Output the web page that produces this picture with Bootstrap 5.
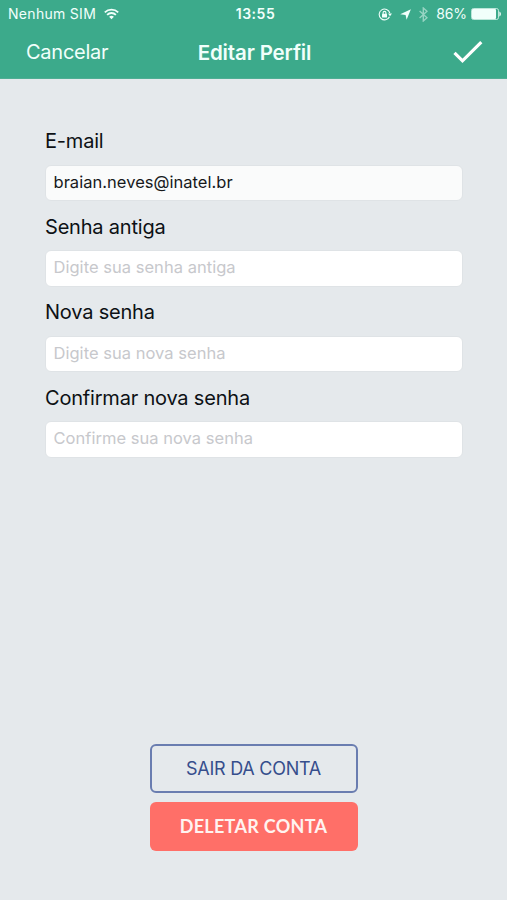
<!DOCTYPE html>
<html lang="pt-BR">
<head>
<meta charset="utf-8">
<meta name="viewport" content="width=device-width, initial-scale=1">
<title>Editar Perfil</title>
<link href="https://cdn.jsdelivr.net/npm/bootstrap@5.3.0/dist/css/bootstrap.min.css" rel="stylesheet">
<style>
body { font-family: Inter, "Liberation Sans", sans-serif; background: #e5e9ec; color: #0d1115; }
.app-header { height: 79px; background: #3caa8b; color: #f1fffb; border-bottom: 1px solid #4fae94; }
.status-bar { height: 28px; font-size: 14px; padding: 0 6px 0 8px; line-height: 28px; }
.status-side { flex: 1 1 0; }
.carrier { letter-spacing: .3px; }
.clock { font-weight: 600; letter-spacing: .55px; padding-left: 2px; }
.battery-text { letter-spacing: -.1px; }
.title-bar { height: 49px; padding: 0 24px 0 26px; font-size: 20px; line-height: 49px; }
.cancel { color: inherit; font-size: 20px; letter-spacing: -.25px; }
.screen-title { font-size: 20.5px; font-weight: 600; letter-spacing: -.15px; }
.profile-form { padding: 48px 44px 0 45px; }
.field { margin-bottom: 11.5px; }
.field .form-label { display: block; font-size: 20px; line-height: 28px; margin-bottom: 9.5px; letter-spacing: -.2px; }
.field .form-control { height: 36.5px; font-size: 16.5px; line-height: 24px; padding: 4px 8px 6px 7.5px; border: 1px solid #dfe3e6; border-radius: 6px; color: #17191b; background: #fff; letter-spacing: .03px; }
.field .form-control::placeholder { color: #c7c8cc; opacity: 1; }
.field .form-control.filled { background: #fafbfb; }
.actions { padding-bottom: 49px; gap: 9px; }
.actions .btn { width: 208px; height: 49px; padding: 0; border-radius: 6px; font-size: 18px; }
.btn-signout, .btn-signout:hover { color: #364e8c; border: 2px solid #6a7db0; letter-spacing: -.25px; }
.actions .btn-delete { background: #ff6f68; color: #fff3f0; border: 0; font-family: Lato, sans-serif; font-weight: 700; letter-spacing: .3px; }
svg { display: block; }
</style>
</head>
<body>
<div class="d-flex flex-column vh-100">
  <header class="app-header flex-shrink-0">
    <div class="status-bar d-flex align-items-center">
      <div class="status-side d-flex align-items-center">
        <span class="carrier">Nenhum SIM</span>
        <svg class="ms-2" width="15" height="12" viewBox="0 0 15 12" fill="none" stroke="currentColor" stroke-width="1.8"><path d="M.8 4.3a9.6 9.6 0 0 1 13.4 0M3.1 6.8a6.3 6.3 0 0 1 8.8 0"/><path d="M7.5 11.3 5.1 8.8a3.5 3.5 0 0 1 4.8 0z" fill="currentColor" stroke="none"/></svg>
      </div>
      <span class="clock">13:55</span>
      <div class="status-side d-flex align-items-center justify-content-end">
        <svg width="14" height="13" viewBox="0 0 14 13" fill="none" stroke="currentColor" stroke-width="1.1"><path d="M11.5 8.7A5.4 5.4 0 1 1 11.8 5"/><path d="M10 5.4h4l-2 2.8z" fill="currentColor" stroke="none"/><rect x="4" y="5.8" width="5" height="3.8" rx=".5" fill="currentColor" stroke="none"/><path d="M5.1 6V4.8a1.4 1.4 0 0 1 2.8 0V6"/></svg>
        <svg class="ms-2" width="11" height="11" viewBox="0 0 11 11" fill="currentColor"><path d="M10.9.3 6.6 10.8 5.6 6 .2 5.2z"/></svg>
        <svg class="ms-2 opacity-50" width="9" height="15" viewBox="0 0 9 15" fill="none" stroke="currentColor" stroke-width="1.4"><path d="M.6 4 8 10.8 4.3 14V1L8 4.2.6 11"/></svg>
        <span class="battery-text ms-2">86%</span>
        <svg class="ms-1" width="30" height="12" viewBox="0 0 30 12" fill="currentColor"><rect x=".5" y=".5" width="27" height="11" rx="2" fill="none" stroke="currentColor" stroke-opacity=".7"/><rect x="1" y="1" width="24" height="10" rx="1"/><path d="M28.4 3.6c2 .9 2 3.9 0 4.8z"/></svg>
      </div>
    </div>
    <div class="title-bar d-flex align-items-center">
      <div class="status-side"><a href="#" class="cancel text-decoration-none">Cancelar</a></div>
      <span class="screen-title">Editar Perfil</span>
      <div class="status-side d-flex justify-content-end">
        <svg width="30" height="24" viewBox="0 0 30 24" fill="none" stroke="#fff" stroke-width="3.2"><path d="m1.5 11.8 8 8L28.3 1.2"/></svg>
      </div>
    </div>
  </header>
  <main class="d-flex flex-column flex-grow-1">
    <form class="profile-form">
      <div class="field"><label class="form-label" for="email">E-mail</label><input id="email" class="form-control filled shadow-none" type="text" value="braian.neves@inatel.br"></div>
      <div class="field"><label class="form-label" for="old">Senha antiga</label><input id="old" class="form-control shadow-none" type="password" placeholder="Digite sua senha antiga"></div>
      <div class="field"><label class="form-label" for="new">Nova senha</label><input id="new" class="form-control shadow-none" type="password" placeholder="Digite sua nova senha"></div>
      <div class="field"><label class="form-label" for="confirm">Confirmar nova senha</label><input id="confirm" class="form-control shadow-none" type="password" placeholder="Confirme sua nova senha"></div>
    </form>
    <div class="actions d-flex flex-column align-items-center mt-auto">
      <button type="button" class="btn btn-signout">SAIR DA CONTA</button>
      <button type="button" class="btn btn-delete">DELETAR CONTA</button>
    </div>
  </main>
</div>
<script src="https://cdn.jsdelivr.net/npm/bootstrap@5.3.0/dist/js/bootstrap.bundle.min.js"></script>
</body>
</html>
